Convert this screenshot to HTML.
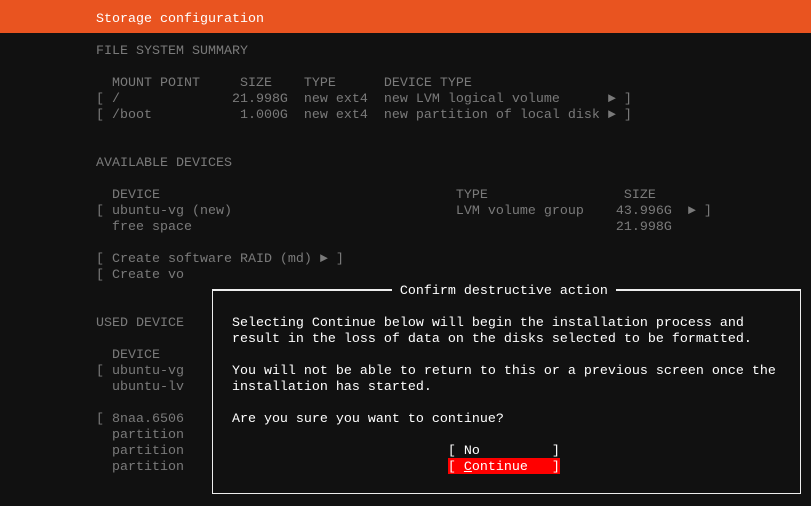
<!DOCTYPE html>
<html><head><style>
html,body{margin:0;padding:0;background:#111;width:811px;height:506px;overflow:hidden;position:relative}
pre{margin:0;font-family:"Liberation Mono","DejaVu Sans Mono",monospace;font-size:13.33px;line-height:16px;white-space:pre;position:absolute}
#hdr{position:absolute;left:0;top:0;width:811px;height:33px;background:#e95420}
#bg{left:0;top:12px;color:#7a7a7a}
#title{left:0;top:12px;color:#fff}
#dlg{position:absolute;left:200px;top:282px;width:611px;height:224px;background:#111}
#box{position:absolute;left:212px;top:289px;width:587px;height:204px;border:1.5px solid #eee;border-top:none}
.tl{position:absolute;top:289px;height:1.5px;background:#eee}
#dt{left:0;top:284px;color:#fff}
#red{position:absolute;left:448px;top:458px;width:112px;height:16px;background:#f00}
</style></head><body>
<div id="hdr"></div>
<pre id="title">            Storage configuration</pre>
<pre id="bg">


            FILE SYSTEM SUMMARY

              MOUNT POINT     SIZE    TYPE      DEVICE TYPE
            [ /              21.998G  new ext4  new LVM logical volume      ► ]
            [ /boot           1.000G  new ext4  new partition of local disk ► ]


            AVAILABLE DEVICES

              DEVICE                                     TYPE                 SIZE
            [ ubuntu-vg (new)                            LVM volume group    43.996G  ► ]
              free space                                                     21.998G

            [ Create software RAID (md) ► ]
            [ Create vo


            USED DEVICE

              DEVICE
            [ ubuntu-vg
              ubuntu-lv

            [ 8naa.6506
              partition
              partition
              partition</pre>
<div id="dlg"></div>
<div id="box"></div>
<div class="tl" style="left:212px;width:180px"></div>
<div class="tl" style="left:616px;width:185px"></div>
<div id="red"></div>
<pre id="dt">                                                  Confirm destructive action

                             Selecting Continue below will begin the installation process and
                             result in the loss of data on the disks selected to be formatted.

                             You will not be able to return to this or a previous screen once the
                             installation has started.

                             Are you sure you want to continue?

                                                        [ No         ]
                                                        [ <u>C</u>ontinue   ]</pre>
</body></html>
